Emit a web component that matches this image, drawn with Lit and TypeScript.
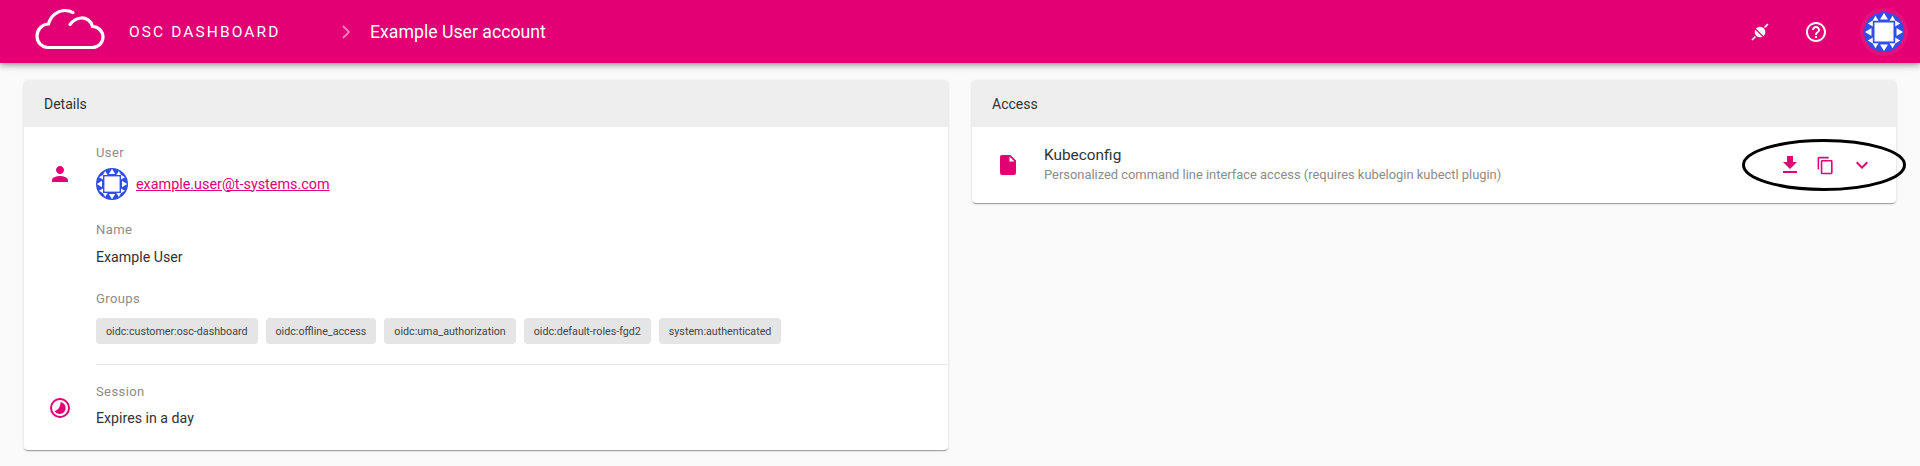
import { LitElement, html, css, svg } from "lit";
import { customElement } from "lit/decorators.js";

const gem = () => svg`
  <circle cx="20" cy="20" r="20" fill="#2f4fe8"/>
  <g fill="#fff">
    <path d="M20 1 24 7.500H16ZM11.500 3.800 14.500 8.800H8.500ZM28.500 3.800 31.500 8.800H25.500Z"/>
    <path d="M20 39 24 32.500H16ZM11.500 36.200 14.500 31.200H8.500ZM28.500 36.200 31.500 31.200H25.500Z"/>
    <path d="M1 20 7.500 24V16ZM3.800 11.500 8.800 14.500V8.500ZM3.800 28.500 8.800 31.500V25.500Z"/>
    <path d="M39 20 32.500 24V16ZM36.200 11.500 31.200 14.500V8.500ZM36.200 28.500 31.200 31.500V25.500Z"/>
    <rect x="10.500" y="10.500" width="19" height="19"/>
  </g>`;

@customElement("app-root")
export class AppRoot extends LitElement {
  static styles = css`
    :host { display: block; height: 466px; overflow: hidden; background: #fafafa; position: relative;
      font-family: "Roboto", "Liberation Sans", sans-serif; color: #333; }
    svg { display: block; flex: none; }
    .bar { height: 63px; background: #e20074; color: #fff; display: flex; align-items: center;
      box-shadow: 0 2px 4px -1px rgba(0,0,0,.2), 0 4px 5px rgba(0,0,0,.14), 0 1px 10px rgba(0,0,0,.12);
      position: relative; }
    .cloud { margin-left: 20px; width: 100px; height: 50px; margin-bottom: 3px; }
    .app { margin-left: 9px; font-size: 15.5px; letter-spacing: 2.1px; width: 213px; white-space: nowrap; }
    .sep { width: 8px; height: 14px; }
    .page { margin-left: 20px; font-size: 17.700px; white-space: nowrap; }
    .spacer { flex: 1; }
    .act { width: 24px; height: 24px; margin-right: 32px; }
    .avatar { width: 48px; height: 48px; border-radius: 50%; background: rgba(255,255,255,.06);
      display: flex; align-items: center; justify-content: center; margin-right: 12px; }
    .avatar svg { width: 40px; height: 40px; }
    .main { display: grid; grid-template-columns: 1fr 1fr; gap: 24px; padding: 17px 24px 0; align-items: start; }
    .card { background: #fff; border-radius: 4px; overflow: hidden;
      box-shadow: 0 2px 1px -1px rgba(0,0,0,.2), 0 1px 1px rgba(0,0,0,.14), 0 1px 3px rgba(0,0,0,.12); }
    .head { height: 47px; background: #eee; padding-left: 20px; display: flex; align-items: center; font-size: 14px; }
    .body { padding-top: 18px; }
    .row { display: flex; }
    .session { padding: 19px 0 22px; }
    .ic { width: 72px; flex: none; display: flex; justify-content: center; }
    .ic-user { padding-top: 17px; }
    .ic-session { padding-top: 12px; }
    .fields { flex: 1; min-width: 0; }
    .label { font-size: 13px; letter-spacing: .4px; line-height: 16px; color: #8c8c8c; }
    .value { font-size: 14.200px; line-height: 20px; }
    .user { display: flex; align-items: center; gap: 8px; margin-top: 7px; height: 32px; }
    .user svg { width: 32px; height: 32px; }
    a { color: #e20074; font-size: 14.360px; }
    .name-l { margin-top: 22px; }
    .name-v { margin-top: 9px; }
    .group-l { margin-top: 24px; }
    .exp { margin-top: 8px; }
    .chips { display: flex; gap: 8px; margin-top: 11px; }
    .chip { height: 26px; padding: 0 10px; border-radius: 4px; background: #e5e5e5; color: #444;
      font-size: 10.700px; display: flex; align-items: center; white-space: nowrap; }
    hr { border: 0; border-top: 1px solid #e4e4e4; margin: 20px 0 0; }
    .kube { height: 76px; display: flex; align-items: center; }
    .kube .doc { width: 16px; height: 20px; margin-left: 28px; margin-right: 28px; }
    .ktitle { font-size: 15.400px; line-height: 20px; }
    .ksub { font-size: 12.900px; line-height: 20px; color: #8c8c8c; }
    .btns { margin-left: auto; display: flex; margin-right: 22px; gap: 14px; align-items: center; }
    .btns svg { width: 24px; height: 24px; }
    .btns svg.copy { width: 19px; height: 19px; margin-right: 1px; }
    .mark { position: absolute; left: 1742px; top: 139px; width: 164px; height: 52px; }
  `;

  render() {
    const groups = ["oidc:customer:osc-dashboard", "oidc:offline_access", "oidc:uma_authorization", "oidc:default-roles-fgd2", "system:authenticated"];
    return html`
      <header class="bar">
        <svg class="cloud" viewBox="0 0 100 50" fill="none" stroke="#fff" stroke-width="3.200" stroke-linecap="round">
          <path d="M53 7.500C47 4.500 40 5 35 9 31 12 29.500 15 28.500 19 21 19.500 17 25.500 17 31 17 38 22.500 42.500 28 42.500H72C78.500 42.500 83 37.500 83 32 83 26 78 21.500 72.500 21.500 71 15.500 66 12.500 61 13 56.500 13.500 53 15.500 50 19.500"/>
        </svg>
        <div class="app">OSC DASHBOARD</div>
        <svg class="sep" viewBox="0 0 8 14" fill="none" stroke="rgba(255,255,255,.5)" stroke-width="1.800"><path d="M1 1l6 6-6 6"/></svg>
        <div class="page">Example User account</div>
        <div class="spacer"></div>
        <svg class="act" viewBox="0 0 24 24" fill="#fff" stroke="#fff">
          <path d="M4 20 7.500 16.500M16.500 7.500 20 4" stroke-width="1.500"/>
          <circle cx="12" cy="12" r="5.300" stroke="none"/>
          <path d="M7.500 9 15 16.500" stroke="#e20074" stroke-width="1.300"/>
        </svg>
        <svg class="act" viewBox="0 0 24 24" fill="#fff">
          <path d="M11 18h2v-2h-2v2zm1-16C6.480 2 2 6.480 2 12s4.480 10 10 10 10-4.480 10-10S17.520 2 12 2zm0 18c-4.410 0-8-3.590-8-8s3.590-8 8-8 8 3.590 8 8-3.590 8-8 8zm0-14c-2.210 0-4 1.790-4 4h2c0-1.100.9-2 2-2s2 .9 2 2c0 2-3 1.750-3 5h2c0-2.250 3-2.500 3-5 0-2.210-1.790-4-4-4z"/>
        </svg>
        <div class="avatar"><svg viewBox="0 0 40 40">${gem()}</svg></div>
      </header>
      <div class="main">
        <section class="card">
          <div class="head">Details</div>
          <div class="body">
            <div class="row">
              <div class="ic ic-user">
                <svg width="24" height="24" viewBox="0 0 24 24" fill="#e20074"><path d="M12 12c2.210 0 4-1.790 4-4s-1.790-4-4-4-4 1.790-4 4 1.790 4 4 4zm0 2c-2.670 0-8 1.340-8 4v2h16v-2c0-2.660-5.330-4-8-4z"/></svg>
              </div>
              <div class="fields">
                <div class="label">User</div>
                <div class="user"><svg viewBox="0 0 40 40">${gem()}</svg><a href="#">example.user@t-systems.com</a></div>
                <div class="label name-l">Name</div>
                <div class="value name-v">Example User</div>
                <div class="label group-l">Groups</div>
                <div class="chips">${groups.map((g) => html`<span class="chip">${g}</span>`)}</div>
                <hr />
              </div>
            </div>
            <div class="row session">
              <div class="ic ic-session">
                <svg width="24" height="24" viewBox="0 0 24 24" fill="#e20074"><path fill-rule="evenodd" d="M12 2a10 10 0 1 1 0 20 10 10 0 0 1 0-20Zm0 2a8 8 0 1 0 0 16 8 8 0 0 0 0-16Z"/><path d="M12.500 6A6 6 0 1 1 6.500 15C9.800 14.500 12.500 11 12.500 6Z"/></svg>
              </div>
              <div class="fields">
                <div class="label">Session</div>
                <div class="value exp">Expires in a day</div>
              </div>
            </div>
          </div>
        </section>
        <section class="card">
          <div class="head">Access</div>
          <div class="kube">
            <svg class="doc" viewBox="0 0 16 20" fill="#e20074"><path d="M2 0h8.500L16 5.500V18a2 2 0 0 1-2 2H2a2 2 0 0 1-2-2V2a2 2 0 0 1 2-2Zm7.500 1.500V6.500h5Z" fill-rule="evenodd"/></svg>
            <div>
              <div class="ktitle">Kubeconfig</div>
              <div class="ksub">Personalized command line interface access (requires kubelogin kubectl plugin)</div>
            </div>
            <div class="btns">
              <svg viewBox="0 0 24 24" fill="#e20074"><path d="M19 9h-4V3H9v6H5l7 7 7-7zM5 18v2h14v-2H5z"/></svg>
              <svg class="copy" viewBox="0 0 24 24" fill="#e20074"><path d="M16 1H4c-1.100 0-2 .9-2 2v14h2V3h12V1zm3 4H8c-1.100 0-2 .9-2 2v14c0 1.100.9 2 2 2h11c1.100 0 2-.9 2-2V7c0-1.100-.9-2-2-2zm0 16H8V7h11v14z"/></svg>
              <svg viewBox="0 0 24 24" fill="#e20074"><path d="M7.410 8.590 12 13.170l4.590-4.580L18 10l-6 6-6-6 1.410-1.410z"/></svg>
            </div>
          </div>
        </section>
      </div>
      <svg class="mark" viewBox="0 0 164 52" fill="none" stroke="#000" stroke-width="3"><ellipse cx="82" cy="26" rx="80.500" ry="24.500"/></svg>
    `;
  }
}
